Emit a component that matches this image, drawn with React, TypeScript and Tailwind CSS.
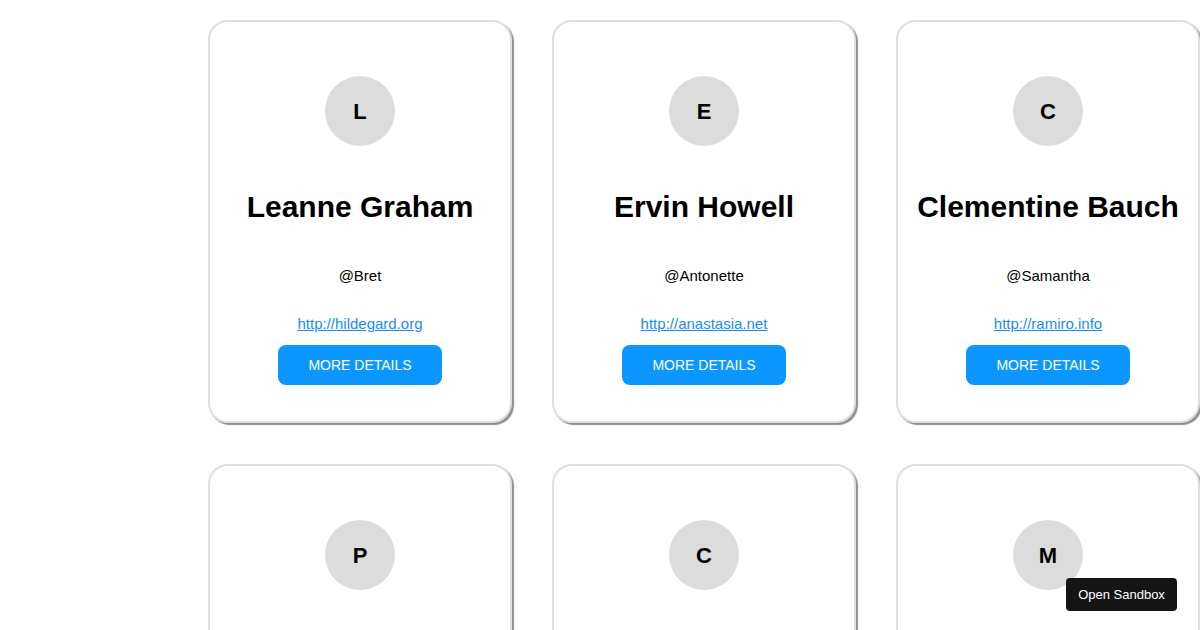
const users = [
  { name: "Leanne Graham", username: "Bret", website: "hildegard.org" },
  { name: "Ervin Howell", username: "Antonette", website: "anastasia.net" },
  { name: "Clementine Bauch", username: "Samantha", website: "ramiro.info" },
  { name: "Patricia Lebsack", username: "Karianne", website: "kale.biz" },
  { name: "Chelsey Dietrich", username: "Kamren", website: "demarco.info" },
  { name: "Mrs. Dennis Schulist", username: "Leopoldo_Corkery", website: "ola.org" },
];

const UserCard = ({ user }: { user: (typeof users)[number] }) => {
  return (
    <div className="w-[304px] h-[403px] flex flex-col items-center border-2 border-[#dedede] rounded-[20px] bg-white shadow-[2px_2px_1px_#8f8f8f]">
      <div className="mt-[54px] w-[70px] h-[70px] rounded-full bg-[#dcdcdc] flex items-center justify-center text-[22px] font-bold text-black">
        {user.name[0]}
      </div>
      <h2 className="mt-[43px] text-[30px] leading-[36px] font-bold text-black whitespace-nowrap">
        {user.name}
      </h2>
      <span className="mt-[41px] text-[15px] leading-[20px] text-black">
        @{user.username}
      </span>
      <a
        href="#"
        className="mt-[28px] text-[15px] leading-[20px] text-[#1a8cf0] underline"
      >
        http://{user.website}
      </a>
      <button className="mt-[11px] h-[40px] px-[30px] rounded-lg bg-[#0b97ff] text-white text-[14px]">
        MORE DETAILS
      </button>
    </div>
  );
};

export default function App() {
  return (
    <div
      className="relative w-[1200px] h-[630px] overflow-hidden bg-white"
      style={{ fontFamily: '"Liberation Sans", Arial, sans-serif' }}
    >
      <div className="grid grid-cols-[repeat(3,304px)] gap-x-[40px] gap-y-[41px] pl-[208px] pt-[20px]">
        {users.map((u) => (
          <UserCard key={u.username} user={u} />
        ))}
      </div>
      <div className="absolute left-[1066px] top-[578px] w-[111px] h-[33px] rounded bg-[#151515] text-white text-[13px] flex items-center justify-center">
        Open Sandbox
      </div>
    </div>
  );
}
